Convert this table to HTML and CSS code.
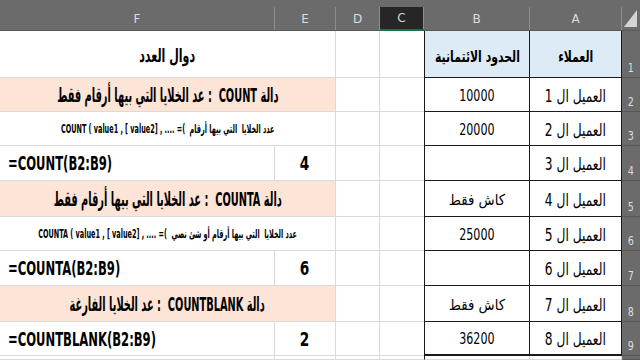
FILE: index.html
```html
<!DOCTYPE html>
<html lang="ar">
<head>
<meta charset="utf-8">
<title>Sheet</title>
<link rel="stylesheet" href="styles.css">
</head>
<body>
<div class="sheet">
  <div class="ch"><span>F</span></div>
  <div class="ch"><span>E</span></div>
  <div class="ch"><span>D</span></div>
  <div class="ch sel"><span>C</span></div>
  <div class="ch"><span>B</span></div>
  <div class="ch"><span>A</span></div>
  <div class="corner"><svg width="18" height="31" viewBox="0 0 18 31"><polygon points="15,10 15,27 2,27" fill="#d4d4d4"/></svg></div>

  <div class="c fe title"><span class="t" dir="rtl">دوال العدد</span></div>
  <div class="c"></div>
  <div class="c nc"></div>
  <div class="c tb th"><span class="t" dir="rtl">الحدود الائتمانية</span></div>
  <div class="c ta th"><span class="t" dir="rtl">العملاء</span></div>
  <div class="rh"><span>1</span></div>

  <div class="c fe pink"><span class="t" dir="rtl">دالة COUNT&nbsp; : عد الخلايا التي بيها أرقام فقط</span></div>
  <div class="c"></div>
  <div class="c nc"></div>
  <div class="c tb td"><span class="t n">10000</span></div>
  <div class="c ta td"><span class="t a" dir="rtl">العميل ال 1</span></div>
  <div class="rh"><span>2</span></div>

  <div class="c fe expl"><span class="t"><bdi dir="ltr">COUNT ( value1 , [ value2] , .... =(</bdi>&nbsp; <bdi dir="rtl">عدد الخلايا&nbsp; التي بيها أرقام</bdi></span></div>
  <div class="c"></div>
  <div class="c nc"></div>
  <div class="c tb td"><span class="t n">20000</span></div>
  <div class="c ta td"><span class="t a" dir="rtl">العميل ال 2</span></div>
  <div class="rh"><span>3</span></div>

  <div class="c fx"><span class="t">=COUNT(B2:B9)</span></div>
  <div class="c num"><span class="t">4</span></div>
  <div class="c"></div>
  <div class="c nc"></div>
  <div class="c tb td"></div>
  <div class="c ta td"><span class="t a" dir="rtl">العميل ال 3</span></div>
  <div class="rh"><span>4</span></div>

  <div class="c fe pink"><span class="t" dir="rtl">دالة COUNTA&nbsp; : عد الخلايا التي بيها أرقام فقط</span></div>
  <div class="c"></div>
  <div class="c nc"></div>
  <div class="c tb td"><span class="t" dir="rtl">كاش فقط</span></div>
  <div class="c ta td"><span class="t a" dir="rtl">العميل ال 4</span></div>
  <div class="rh"><span>5</span></div>

  <div class="c fe expl"><span class="t"><bdi dir="ltr">COUNTA ( value1 , [ value2] , .... =(</bdi>&nbsp; <bdi dir="rtl">عدد الخلايا&nbsp; التي بيها أرقام أو شئ نصي</bdi></span></div>
  <div class="c"></div>
  <div class="c nc"></div>
  <div class="c tb td"><span class="t n">25000</span></div>
  <div class="c ta td"><span class="t a" dir="rtl">العميل ال 5</span></div>
  <div class="rh"><span>6</span></div>

  <div class="c fx"><span class="t">=COUNTA(B2:B9)</span></div>
  <div class="c num"><span class="t">6</span></div>
  <div class="c"></div>
  <div class="c nc"></div>
  <div class="c tb td"></div>
  <div class="c ta td"><span class="t a" dir="rtl">العميل ال 6</span></div>
  <div class="rh"><span>7</span></div>

  <div class="c fe pink"><span class="t" dir="rtl">دالة COUNTBLANK&nbsp; : عد الخلايا الفارغة</span></div>
  <div class="c"></div>
  <div class="c nc"></div>
  <div class="c tb td"><span class="t" dir="rtl">كاش فقط</span></div>
  <div class="c ta td"><span class="t a" dir="rtl">العميل ال 7</span></div>
  <div class="rh"><span>8</span></div>

  <div class="c fx"><span class="t">=COUNTBLANK(B2:B9)</span></div>
  <div class="c num"><span class="t">2</span></div>
  <div class="c"></div>
  <div class="c nc"></div>
  <div class="c tb td last"><span class="t n">36200</span></div>
  <div class="c ta td last"><span class="t a" dir="rtl">العميل ال 8</span></div>
  <div class="rh"><span>9</span></div>

  <div class="c"></div>
  <div class="c"></div>
  <div class="c"></div>
  <div class="c nc"></div>
  <div class="c tbx"></div>
  <div class="c tax"></div>
  <div class="rh"></div>
</div>
</body>
</html>
```
FILE: styles.css
```css
* { box-sizing: border-box; margin: 0; padding: 0; }
html, body { width: 640px; height: 360px; overflow: hidden; background: #fff; }
body {
  font-family: "DejaVu Sans", sans-serif;
  color: #000;
}
.sheet {
  display: grid;
  grid-template-columns: 275px 61px 44px 44px 106px 92px 18px;
  grid-template-rows: 31px 47px 34px 34px 35px 36px 34px 35px 36px 34px 4px;
}
.ch {
  background: #6b6b6b;
  padding-top: 7px;
  display: flex;
  border-bottom: 1px solid #595959;
}
.ch span {
  flex: 1;
  display: flex;
  align-items: center;
  justify-content: center;
  color: #dcdcdc;
  font-size: 12px;
  border-right: 1px solid #8e8e8e;
}
.ch.sel { border-bottom: 2px solid #1e7145; }
.ch.sel span { background: #262626; color: #cfcfcf; }
.corner { background: #6b6b6b; border-bottom: 1px solid #595959; }
.corner svg { display: block; }

.c {
  border-right: 1px solid #dadada;
  border-bottom: 1px solid #dadada;
  display: flex;
  align-items: center;
  justify-content: center;
  white-space: nowrap;
  overflow: hidden;
  min-width: 0;
}
.t { display: inline-block; flex: none; transform-origin: center; }
.nc { border-right: none; }
.fe { grid-column: span 2; }

.title { font-size: 19px; font-weight: bold; padding-top: 2px; }
.title .t { transform: scaleX(0.58); }
.pink { background: #fce4d6; font-size: 20px; font-weight: bold; }
.pink .t { transform: scaleX(0.49); }
.expl { font-size: 12px; font-weight: bold; }
.expl .t { transform: scaleX(0.54); }
.fx { justify-content: flex-start; padding-left: 8px; font-size: 19px; font-weight: bold; }
.fx .t { transform: scaleX(0.61); transform-origin: left center; }
.num { font-size: 19px; font-weight: bold; }
.num .t { transform: scaleX(0.72); }

.tb { border-left: 1px solid #1a1a1a; border-right: 1px solid #1a1a1a; border-bottom: 1px solid #1a1a1a; }
.ta { border-right: 1px solid #1a1a1a; border-bottom: 1px solid #1a1a1a; }
.last { border-bottom-width: 2px; }
.tbx { border-left: 1px solid #1a1a1a; }
.th { background: #ddebf7; font-size: 16px; font-weight: bold; padding-top: 4px; }
.th .t { transform: scaleX(0.68); }
.td { font-size: 15px; padding-top: 2px; }
.td .t { transform: scaleX(0.88); }
.td .t.n { transform: scaleX(0.74); }
.td .t.a { font-size: 17px; transform: scaleX(0.72); }

.rh {
  background: #6b6b6b;
  color: #dedede;
  font-size: 12px;
  display: flex;
  align-items: flex-end;
  justify-content: center;
  padding-bottom: 2px;
  border-bottom: 1px solid #575757;
}
.rh span { display: inline-block; transform: scaleX(0.8); }
```
